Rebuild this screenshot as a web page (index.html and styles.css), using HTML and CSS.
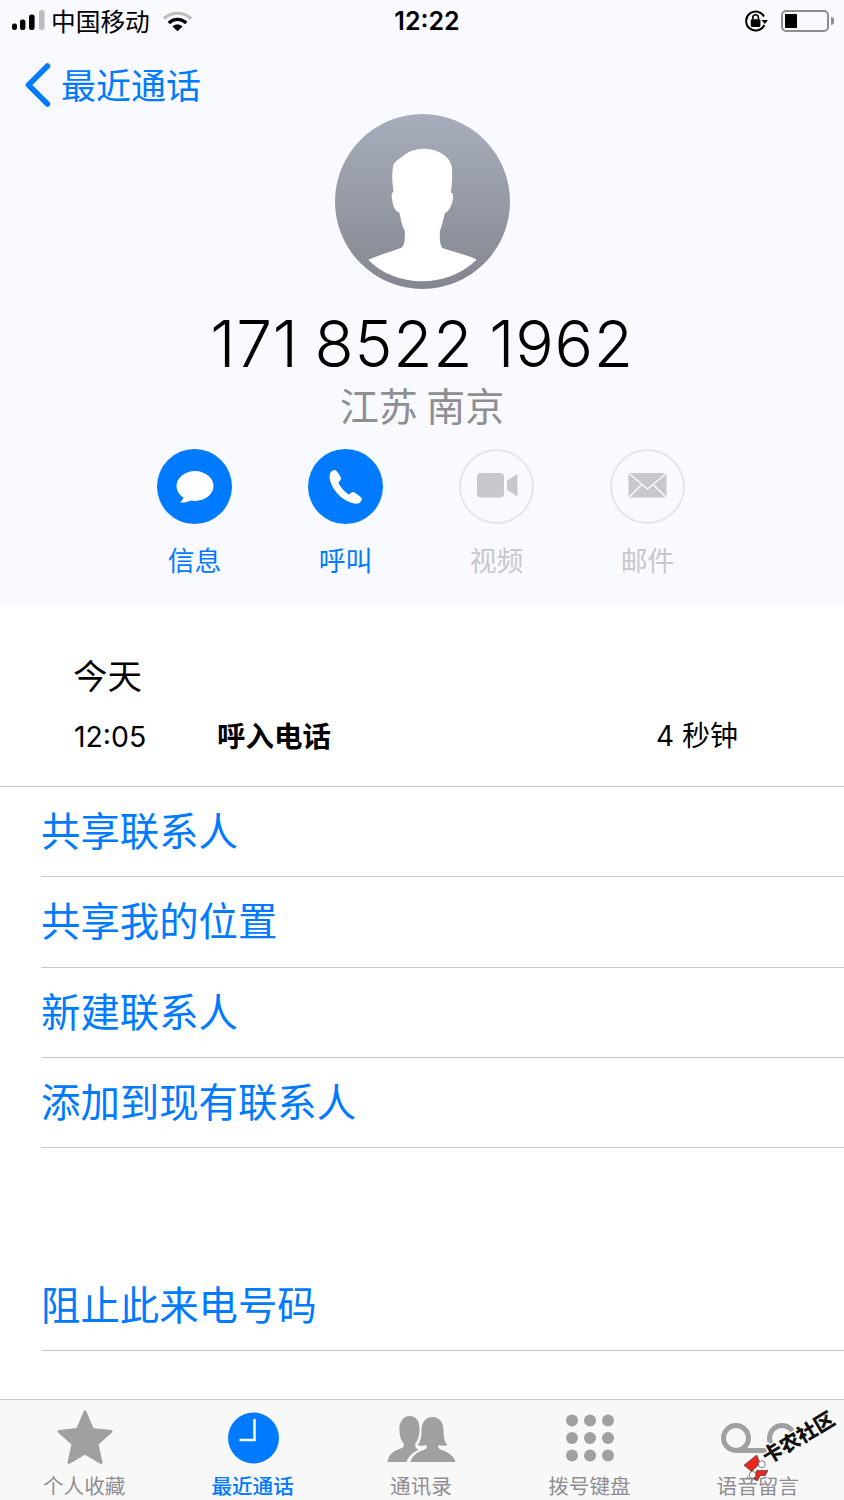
FILE: index.html
```html
<!DOCTYPE html>
<html lang="zh-CN">
<head>
<meta charset="utf-8">
<title>最近通话</title>
<link rel="stylesheet" href="styles.css">
</head>
<body>
<div class="phone">
  <header class="top">
    <div class="status">
      <div class="status-left">
        <svg class="signal" width="34" height="22" viewBox="0 0 34 22"><rect x="0" y="13.5" width="5" height="6.5" rx="2.2" fill="#000"/><rect x="8" y="9.5" width="5.4" height="10.5" rx="2.2" fill="#000"/><rect x="17" y="4.5" width="5.6" height="15.5" rx="2.2" fill="#000"/><rect x="27" y="0" width="5.6" height="20" rx="2.2" fill="#bdbdbf"/></svg>
        <span class="carrier">中国移动</span>
        <svg class="wifi" width="30" height="22" viewBox="0 0 30 22"><path d="M1 8.5C8.5 1.5 20.5 1.5 28 8.5" fill="none" stroke="#bdbdbf" stroke-width="3.2"/><path d="M5.8 13C11 8.2 18 8.2 23.2 13" fill="none" stroke="#000" stroke-width="3.2"/><path d="M9.5 16.4C12.5 14 16.5 14 19.5 16.4L14.5 21.2Z" fill="#000"/></svg>
      </div>
      <div class="clock">12:22</div>
      <div class="status-right">
        <svg class="lock" width="25" height="22" viewBox="0 0 25 22"><path d="M20 6.5A9.5 9.5 0 1 0 20.3 15" fill="none" stroke="#000" stroke-width="2"/><path d="M17.5 10H24L20.8 14Z" fill="#000"/><rect x="6.8" y="9.3" width="9.6" height="7.7" rx="1" fill="#000"/><path d="M8.8 9.5V7.5A2.8 2.8 0 0 1 14.4 7.5V9.5" fill="none" stroke="#000" stroke-width="1.6"/></svg>
        <div class="battery"><div class="battery-fill"></div></div>
        <div class="battery-nub"></div>
      </div>
    </div>
    <div class="back">
      <svg class="chevron" width="28" height="44" viewBox="0 0 28 44"><path d="M23.5 3L4.5 22L23.5 41" fill="none" stroke="#007aff" stroke-width="5.5" stroke-linecap="round" stroke-linejoin="round"/></svg>
      <span class="back-text">最近通话</span>
    </div>
    <svg class="avatar" width="175" height="175" viewBox="42 42 526 526">
      <defs><linearGradient id="avatarGrad" x1="0" y1="0" x2="0" y2="1"><stop offset="0" stop-color="#a7adbb"/><stop offset="1" stop-color="#84878f"/></linearGradient></defs>
      <circle cx="305" cy="305" r="263" fill="url(#avatarGrad)"/>
      <path d="M142 480C175 465 215 455 240 445C252 438 252 420 252 395C240 370 238 345 235 338C222 335 215 320 212 285C214 278 218 276 218 276C214 250 212 220 217 195C225 180 240 175 250 165C270 150 300 145 320 147C350 150 385 165 393 200C396 230 393 260 390 278C398 280 398 290 396 300C392 320 385 335 372 340C368 360 362 380 357 395C357 420 357 435 365 445C400 458 440 465 468 480C420 525 360 545 305 545C240 545 180 520 142 480Z" fill="#fff"/>
    </svg>
    <h1 class="number">171 8522 1962</h1>
    <div class="location">江苏 南京</div>
    <div class="actions">
      <div class="action">
        <div class="circle circle-on">
          <svg width="75" height="75" viewBox="0 0 75 75"><ellipse cx="38" cy="37" rx="18.5" ry="15" fill="#fff"/><path d="M27 45C27 49 25 52 23 53.5C27 54 32 53 36 50Z" fill="#fff"/></svg>
        </div>
        <div class="label">信息</div>
      </div>
      <div class="action">
        <div class="circle circle-on">
          <svg width="75" height="75" viewBox="0 0 75 75"><path d="M22.5 23.5C24 21.5 26.5 20.5 28 21.5C29.5 22.5 32.5 27.5 33 29C33.5 30.5 31.5 32 30.5 33.5C31.5 37 37 43.5 41 45.5C42.5 44.5 44 42.5 45.5 43C47 43.5 52.5 47.5 53.5 49C54.5 51 52.5 54 50 54.5C44 55.5 34 50.5 28.5 43.5C23 36.5 20 29 22.5 23.5Z" fill="#fff"/></svg>
        </div>
        <div class="label">呼叫</div>
      </div>
      <div class="action">
        <div class="circle circle-off">
          <svg width="75" height="75" viewBox="-1 0 75 75"><rect x="17" y="24" width="27" height="24.5" rx="4" fill="#c7c7cc"/><path d="M47 31.5L57.5 25V47.5L47 41Z" fill="#c7c7cc"/></svg>
        </div>
        <div class="label label-off">视频</div>
      </div>
      <div class="action">
        <div class="circle circle-off">
          <svg width="75" height="75" viewBox="-1 0 75 75"><rect x="17.5" y="24" width="38" height="24.5" fill="#c7c7cc"/><path d="M17.5 24L36.5 40L55.5 24M17.5 48.5L31 35.5M55.5 48.5L42 35.5" fill="none" stroke="#f9faff" stroke-width="1.5"/></svg>
        </div>
        <div class="label label-off">邮件</div>
      </div>
    </div>
  </header>

  <section class="history">
    <div class="day">今天</div>
    <div class="call">
      <span class="call-time">12:05</span>
      <span class="call-type">呼入电话</span>
      <span class="call-length">4 秒钟</span>
    </div>
  </section>

  <ul class="menu">
    <li class="menu-item">共享联系人</li>
    <li class="menu-item">共享我的位置</li>
    <li class="menu-item">新建联系人</li>
    <li class="menu-item">添加到现有联系人</li>
  </ul>
  <ul class="menu menu-block">
    <li class="menu-item">阻止此来电号码</li>
  </ul>

  <nav class="tabs">
    <div class="tab">
      <svg width="80" height="60" viewBox="0 0 80 60"><path d="M41 4L48.5 21.5L67 23.5L53 36L57 54.5L41 45L25 54.5L29 36L15 23.5L33.5 21.5Z" fill="#a0a0a0" stroke="#a0a0a0" stroke-width="3" stroke-linejoin="round"/></svg>
      <span class="tab-label">个人收藏</span>
    </div>
    <div class="tab tab-on">
      <svg width="80" height="60" viewBox="0 0 80 60"><circle cx="40.5" cy="30" r="25.5" fill="#007aff"/><path d="M41.5 12V32H27.5" fill="none" stroke="#fff" stroke-width="2.5" stroke-linecap="round"/></svg>
      <span class="tab-label">最近通话</span>
    </div>
    <div class="tab">
      <svg width="80" height="60" viewBox="0 0 80 60"><g fill="#a0a0a0" transform="translate(1.5 -1)"><path d="M5 55C6 47 11 44 17 42C21 41 22 39 21 36C18 33 17 28 17 24C16 15 21 9 27 9C34 9 37 14 37 22C37 27 36 33 33 36C32 39 33 41 36 43C31 45 26 49 24 55Z"/><path d="M28 55C30 48 35 45 41 43C44 42 45 40 44 38C41 39 37 39 35 38C38 35 39 30 39 24C39 14 44 10 50 10C56 10 61 14 61 24C61 30 62 35 65 38C63 39 59 39 56 38C55 40 56 42 59 43C65 45 71 48 73 55Z"/></g></svg>
      <span class="tab-label">通讯录</span>
    </div>
    <div class="tab">
      <svg width="80" height="60" viewBox="0 0 80 60"><g fill="#a0a0a0"><circle cx="23" cy="12.5" r="6"/><circle cx="41" cy="12.5" r="6"/><circle cx="59" cy="12.5" r="6"/><circle cx="23" cy="30" r="6"/><circle cx="41" cy="30" r="6"/><circle cx="59" cy="30" r="6"/><circle cx="23" cy="47.5" r="6"/><circle cx="41" cy="47.5" r="6"/><circle cx="59" cy="47.5" r="6"/></g></svg>
      <span class="tab-label">拨号键盘</span>
    </div>
    <div class="tab">
      <svg width="80" height="60" viewBox="0 0 80 60"><g fill="none" stroke="#a0a0a0" stroke-width="5"><circle cx="18" cy="30" r="12.5"/><circle cx="64" cy="30" r="12.5"/><path d="M18 42.5H64"/></g></svg>
      <span class="tab-label">语音留言</span>
    </div>
  </nav>

  <div class="watermark">
    <span class="wm-text">卡农社区</span>
    <svg class="wm-logo" width="26" height="28" viewBox="190 178 76 80"><g stroke="#111" stroke-width="1.5"><path d="M193 210L230 180L240 205L215 228Z" fill="#e8281e"/><path d="M230 225H263L255 240H240L232 256L222 250Z" fill="#e8281e"/><circle cx="245" cy="207" r="10" fill="#fff"/><circle cx="218" cy="238" r="10" fill="#fff"/></g></svg>
  </div>
</div>
</body>
</html>
```
FILE: styles.css
```css
* { box-sizing: border-box; }
html, body { margin: 0; padding: 0; background: #fff; }
body { font-family: "Noto Sans CJK SC", "Noto Sans", sans-serif; color: #000; }
.phone { position: relative; width: 844px; height: 1500px; overflow: hidden; display: flex; flex-direction: column; }

.top { height: 607px; background: #f9faff; display: flex; flex-direction: column; align-items: center; flex: none; }
.status { width: 100%; height: 42px; display: flex; align-items: center; justify-content: space-between; padding: 0 10px 0 12px; }
.status-left { display: flex; align-items: center; width: 304px; }
.signal { margin-right: 6px; }
.carrier { font-size: 24.7px; line-height: 40px; margin: -2px 13px 0 -1px; }
.wifi { display: block; }
.clock { font-family: Inter, "Liberation Sans", sans-serif; font-size: 25px; font-weight: 600; line-height: 42px; }
.status-right { display: flex; align-items: center; justify-content: flex-end; width: 296px; }
.lock { margin-right: 12px; }
.battery { width: 48px; height: 22px; border: 2px solid #8e8e93; border-radius: 5px; padding: 2px; }
.battery-fill { width: 12px; height: 14px; background: #000; }
.battery-nub { width: 3px; height: 8px; background: #8e8e93; border-radius: 0 3px 3px 0; margin-left: 2px; }

.back { width: 100%; height: 70px; display: flex; align-items: center; padding: 15px 0 0 24px; color: #007aff; font-size: 35px; }
.back-text { line-height: 46px; margin-top: -2px; }
.chevron { margin-right: 9px; }
.avatar { margin-top: 2px; display: block; flex: none; }
.number { margin: 20px 0 0; font-family: Inter, "Liberation Sans", sans-serif; font-weight: 300; font-size: 64px; line-height: 70px; letter-spacing: 0.8px; word-spacing: -3px; white-space: nowrap; }
.location { font-size: 39px; line-height: 50px; color: #8e8e93; }
.actions { display: flex; margin-top: 20px; padding-right: 2px; }
.action { width: 151px; display: flex; flex-direction: column; align-items: center; }
.circle { width: 75px; height: 75px; border-radius: 50%; }
.circle svg { display: block; }
.circle-on { background: #007aff; }
.circle-off { box-shadow: inset 0 0 0 2px #e5e5ea; }
.label { font-size: 26.8px; line-height: 40px; margin-top: 16px; color: #007aff; }
.label-off { color: #c7c7cc; }

.history { flex: none; height: 180px; border-bottom: 1px solid #c8c7cc; padding: 44px 0 0 74px; }
.day { font-size: 34.5px; line-height: 46px; margin-left: -1px; }
.call { display: flex; align-items: center; height: 40px; margin-top: 17px; font-size: 28px; }
.call-time { width: 143px; font-family: Inter, "Liberation Sans", sans-serif; font-size: 28.4px; padding-top: 4px; }
.call-type { width: 439px; font-weight: 700; font-size: 28.5px; }
.call-length { font-family: Inter, "Noto Sans CJK SC", sans-serif; }

.menu { list-style: none; margin: 0; padding: 0 0 0 41px; flex: none; }
.menu-block { margin-top: 113px; }
.menu-item { height: 90.3px; line-height: 83px; font-size: 39.4px; color: #007aff; border-bottom: 1px solid #c8c7cc; white-space: nowrap; }

.tabs { position: absolute; left: 0; right: 0; bottom: 0; height: 101px; background: #f8f8f8; border-top: 1px solid #c8c7cc; padding-right: 2px; display: grid; grid-template-columns: repeat(5, 1fr); }
.tab { display: flex; flex-direction: column; align-items: center; padding-top: 8px; color: #8e8e93; }
.tab svg { display: block; flex: none; }
.tab-on { color: #007aff; }
.tab-label { font-size: 20.6px; line-height: 30px; margin-top: 2px; white-space: nowrap; }
.tab-on .tab-label { font-weight: 500; }

.watermark { position: absolute; left: 742px; top: 1404px; width: 100px; height: 96px; }
.wm-logo { position: absolute; left: 1px; top: 50px; }
.wm-text { position: absolute; left: 16px; top: 20px; font-size: 20px; font-weight: 900; line-height: 26px; color: #111; transform: rotate(-31deg); white-space: nowrap; -webkit-text-stroke: 3px #fff; paint-order: stroke fill; }
```
